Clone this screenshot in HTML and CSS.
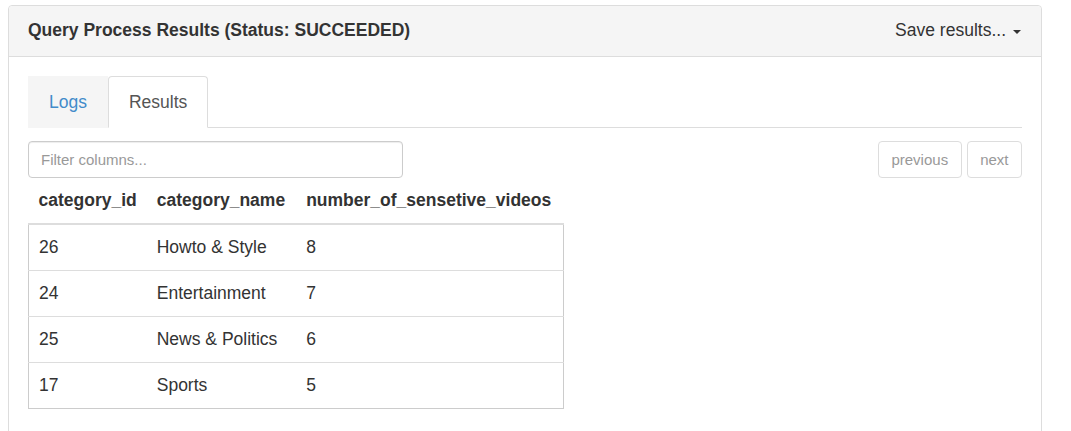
FILE: index.html
```html
<!DOCTYPE html>
<html>
<head>
<meta charset="utf-8">
<link rel="stylesheet" href="styles.css">
</head>
<body>
<div class="panel">
  <div class="panel-heading">
    <span class="title">Query Process Results (Status: SUCCEEDED)</span>
    <span class="save">Save results... <span class="caret"></span></span>
  </div>
  <div class="panel-body">
    <div class="tabs">
      <div class="tab">Logs</div>
      <div class="tab active">Results</div>
    </div>
    <div class="toolbar">
      <input class="filter" type="text" placeholder="Filter columns...">
      <div class="pager">
        <button class="btn">previous</button>
        <button class="btn">next</button>
      </div>
    </div>
    <table class="results">
      <thead>
        <tr><th>category_id</th><th class="wide">category_name</th><th class="last">number_of_sensetive_videos</th></tr>
      </thead>
      <tbody>
        <tr><td>26</td><td>Howto &amp; Style</td><td>8</td></tr>
        <tr><td>24</td><td>Entertainment</td><td>7</td></tr>
        <tr><td>25</td><td>News &amp; Politics</td><td>6</td></tr>
        <tr><td>17</td><td>Sports</td><td>5</td></tr>
      </tbody>
    </table>
  </div>
</div>
</body>
</html>
```
FILE: styles.css
```css
* { box-sizing: border-box; }
body {
  margin: 5px 8px;
  font-family: "Liberation Sans", Arial, sans-serif;
  font-size: 17.5px;
  color: #333;
  background: #fff;
}
.panel {
  width: 1034px;
  border: 1px solid #ddd;
  border-radius: 4px;
}
.panel-heading {
  display: flex;
  justify-content: space-between;
  align-items: center;
  background: #f5f5f5;
  border-bottom: 1px solid #ddd;
  padding: 14px 20px 15px 19px;
  line-height: 21px;
  border-radius: 4px 4px 0 0;
}
.title { font-weight: bold; }
.save { display: flex; align-items: center; gap: 7px; }
.caret {
  width: 0; height: 0;
  border-left: 4px solid transparent;
  border-right: 4px solid transparent;
  border-top: 4px solid #333;
  margin-top: 2px;
}
.panel-body { padding: 19px 19px 30px 19px; }
.tabs {
  display: flex;
  border-bottom: 1px solid #ddd;
}
.tab {
  padding: 15px 20px 14px;
  line-height: 21px;
  color: #428bca;
  background: #f5f5f5;
  margin-bottom: -1px;
  border: 1px solid transparent;
}
.tab.active {
  color: #555;
  background: #fff;
  border: 1px solid #ddd;
  border-bottom-color: #fff;
  border-radius: 4px 4px 0 0;
}
.toolbar {
  display: flex;
  justify-content: space-between;
  margin-top: 13px;
}
.filter {
  width: 375px;
  height: 37px;
  border: 1px solid #ccc;
  border-radius: 4px;
  padding: 0 12px;
  font-family: inherit;
  font-size: 15px;
  color: #555;
  box-shadow: inset 0 1px 1px rgba(0,0,0,.075);
}
.filter::placeholder { color: #999; }
.pager { display: flex; gap: 5px; }
.btn {
  height: 37px;
  padding: 0 12.5px;
  border: 1px solid #ddd;
  border-radius: 4px;
  background: #fff;
  color: #999;
  font-family: inherit;
  font-size: 15px;
}
.results {
  border-collapse: collapse;
}
.results th {
  text-align: left;
  padding: 12px 10px;
  line-height: 21px;
  font-weight: bold;
  border-bottom: 2px solid #ddd;
}
.results th.wide { padding-right: 11px; }
.results th.last { padding-right: 12px; }
.results tbody {
  border-left: 1px solid #ccc;
  border-right: 1px solid #ccc;
  border-bottom: 1px solid #ccc;
}
.results td {
  padding: 12px 10px;
  line-height: 21px;
  border-top: 1px solid #ddd;
}
```
